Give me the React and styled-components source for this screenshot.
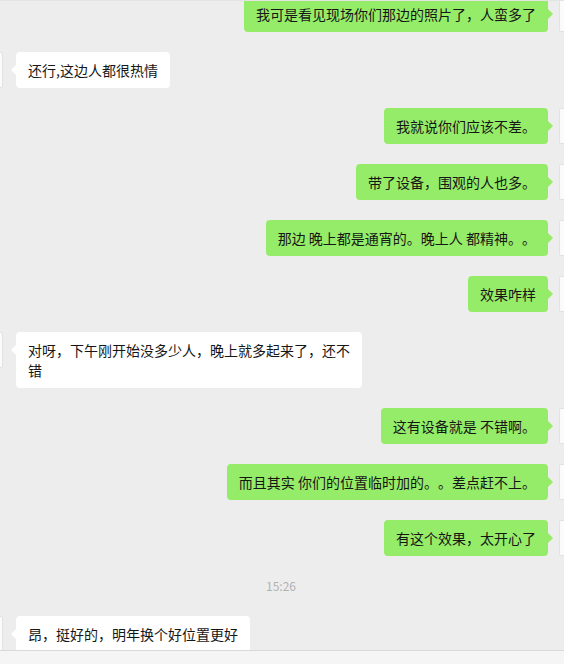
import React from "react";
import styled, { createGlobalStyle, css } from "styled-components";

const GlobalStyle = createGlobalStyle`
  html, body {
    margin: 0;
    padding: 0;
    background: #ededed;
  }
  body {
    font-family: "Noto Sans CJK SC", "Noto Sans", sans-serif;
  }
`;

const Window = styled.div`
  width: 564px;
  height: 664px;
  display: flex;
  flex-direction: column;
  background: #ededed;
  overflow: hidden;
`;

const ChatArea = styled.div`
  flex: 1;
  overflow: hidden;
  border-top: 1px solid #e4e4e4;
`;

const MessageList = styled.div`
  display: flex;
  flex-direction: column;
  gap: 20px;
  margin: -5px -35px 0 -37px;
`;

const Row = styled.div`
  display: flex;
  align-items: flex-start;
  flex-direction: ${(p) => (p.$mine ? "row-reverse" : "row")};
  gap: ${(p) => (p.$mine ? "11px" : "13px")};
`;

const Avatar = styled.div`
  flex: none;
  width: 40px;
  height: 36px;
  box-sizing: border-box;
  background: #fbfbfb;
  border: 1px solid #e2e2e2;
  border-radius: 2px;
`;

const Bubble = styled.div`
  position: relative;
  box-sizing: border-box;
  max-width: 346px;
  padding: 8px 12px;
  border-radius: 4px;
  font-size: 14px;
  line-height: 20px;
  color: #161616;
  white-space: pre-wrap;
  word-break: break-all;
  text-spacing-trim: space-all;
  font-feature-settings: "halt" 0, "chws" 0;
  background: ${(p) => (p.$mine ? "#95ec69" : "#ffffff")};

  &::before {
    content: "";
    position: absolute;
    top: 13px;
    width: 0;
    height: 0;
    border-top: 5px solid transparent;
    border-bottom: 5px solid transparent;
    ${(p) =>
      p.$mine
        ? css`
            right: -5px;
            border-left: 5px solid #95ec69;
          `
        : css`
            left: -5px;
            border-right: 5px solid #ffffff;
          `}
  }
`;

const TimeStamp = styled.div`
  align-self: center;
  height: 20px;
  line-height: 20px;
  font-size: 12px;
  color: #b2b2b2;
`;

const Footer = styled.div`
  flex: none;
  height: 13px;
  background: #f5f5f5;
  border-top: 1px solid #d9d9d9;
`;

const messages = [
  { mine: true, text: "我可是看见现场你们那边的照片了，人蛮多了" },
  { mine: false, text: "还行,这边人都很热情" },
  { mine: true, text: "我就说你们应该不差。" },
  { mine: true, text: "带了设备，围观的人也多。" },
  { mine: true, text: "那边 晚上都是通宵的。晚上人 都精神。。" },
  { mine: true, text: "效果咋样" },
  { mine: false, text: "对呀，下午刚开始没多少人，晚上就多起来了，还不错" },
  { mine: true, text: "这有设备就是 不错啊。" },
  { mine: true, text: "而且其实 你们的位置临时加的。。差点赶不上。" },
  { mine: true, text: "有这个效果，太开心了" },
  { time: "15:26" },
  { mine: false, text: "昂，挺好的，明年换个好位置更好" },
];

export default function App() {
  return (
    <>
      <GlobalStyle />
      <Window>
        <ChatArea>
          <MessageList>
            {messages.map((m, i) =>
              m.time ? (
                <TimeStamp key={i}>{m.time}</TimeStamp>
              ) : (
                <Row key={i} $mine={m.mine}>
                  <Avatar />
                  <Bubble $mine={m.mine}>{m.text}</Bubble>
                </Row>
              )
            )}
          </MessageList>
        </ChatArea>
        <Footer />
      </Window>
    </>
  );
}
